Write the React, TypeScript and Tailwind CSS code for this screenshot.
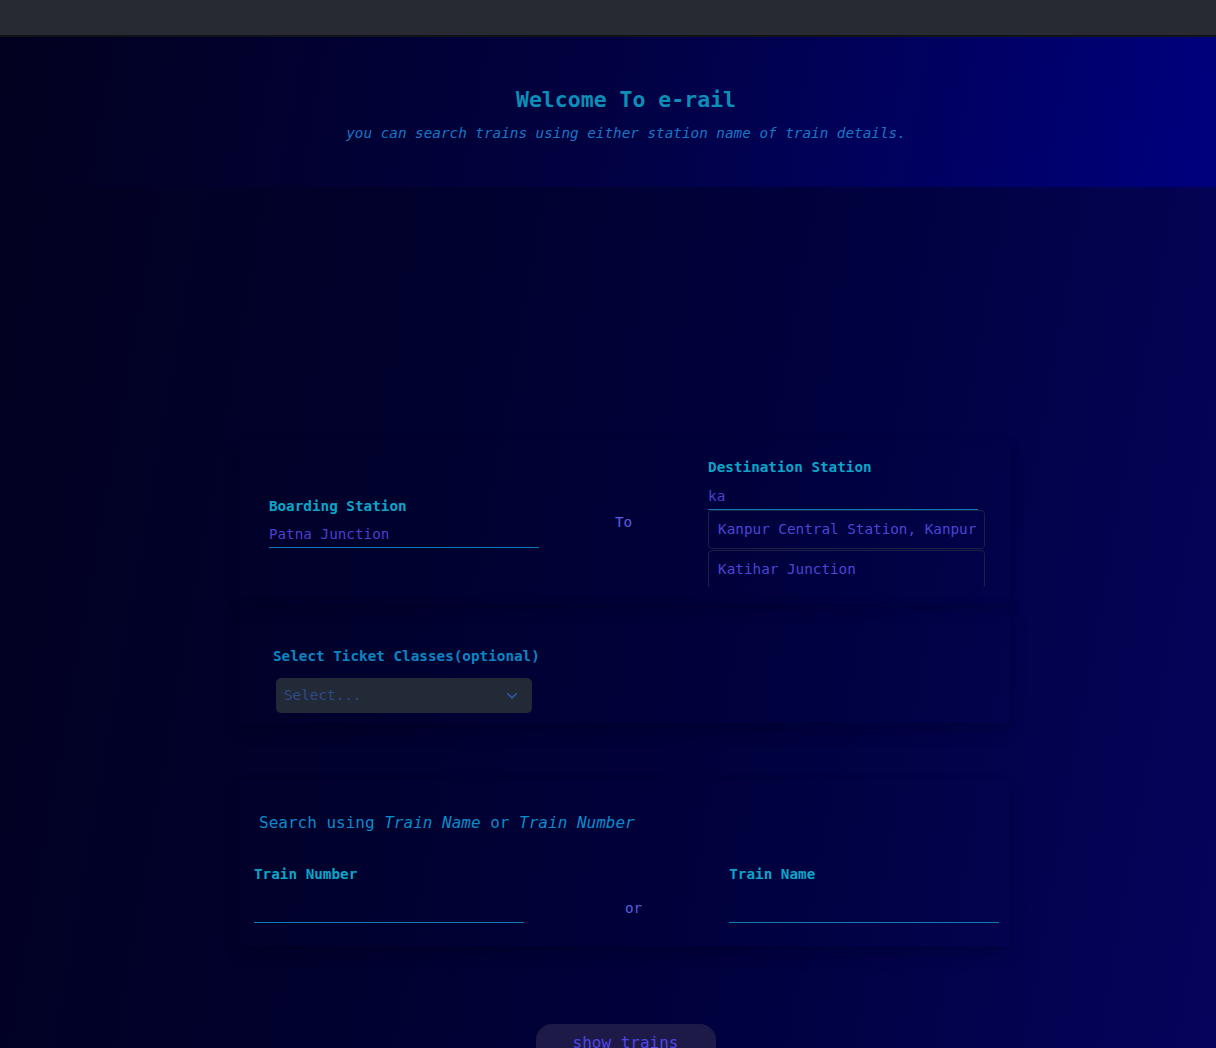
import React from 'react'
import { ChevronDown } from 'lucide-react'

const MONO = "font-['DejaVu_Sans_Mono','Liberation_Mono',monospace]"

const SUGGESTIONS = ['Kanpur Central Station, Kanpur', 'Katihar Junction']

function UnderlineInput({ value, width = 'w-[270px]' }: { value?: string; width?: string }): React.ReactElement {
  return (
    <div className={`${width} h-[28px] border-b border-b-[#0a7bb5] flex items-end pb-[2px] text-[14.3px] text-[#4a40cf]`}>
      {value}
    </div>
  )
}

export default function App(): React.ReactElement {
  return (
    <div className={`${MONO} min-h-screen flex flex-col bg-[linear-gradient(100deg,#020120_0%,#01012e_35%,#00013f_65%,#06035c_100%)]`}>
      {/* Top bar */}
      <div className="h-[37px] shrink-0 bg-[#272a32] border-b-2 border-b-[#111217]" />

      {/* Hero */}
      <div className="h-[150px] shrink-0 flex flex-col items-center pt-[48px] pl-[36px] bg-[linear-gradient(100deg,#02011f_0%,#010142_50%,#00007e_100%)]">
        <h1 className="text-[21.5px] leading-[30px] font-bold text-[#0b8fb8]">Welcome To e-rail</h1>
        <p className="mt-[8px] text-[14.3px] leading-[20px] italic text-[#1877c6]">
          you can search trains using either station name of train details.
        </p>
      </div>

      {/* Body */}
      <div className="flex-1 flex flex-col items-center pl-[34px]">
        {/* Stations */}
        <div className="mt-[254px] w-[770px] pt-4 pb-[16px] shadow-[0_6px_14px_rgba(0,0,0,0.14)] flex items-center justify-center gap-[76px] pl-[3px]">
          <div className="flex flex-col ml-[1px]">
            <label className="text-[14.3px] leading-[20px] font-bold text-[#0aa6c9]">Boarding Station</label>
            <div className="mt-[4px]">
              <UnderlineInput value="Patna Junction" />
            </div>
          </div>

          <span className="text-[14.3px] leading-[20px] text-[#5a5ee0]">To</span>

          <div className="flex flex-col w-[277px]">
            <label className="text-[14.3px] leading-[20px] font-bold text-[#0aa6c9]">Destination Station</label>
            <div className="mt-[5px]">
              <UnderlineInput value="ka" />
            </div>
            <div className="h-[77px] overflow-hidden flex flex-col gap-[1px]">
              {SUGGESTIONS.map((s) => (
                <div
                  key={s}
                  className="h-[39px] shrink-0 flex items-center pl-[9px] border border-[#1c2044] rounded-[4px] text-[14.3px] text-[#4d45d6] whitespace-nowrap overflow-hidden"
                >
                  {s}
                </div>
              ))}
            </div>
          </div>
        </div>

        {/* Ticket classes */}
        <div className="w-[770px] pt-[43px] pb-[10px] pl-[33px] shadow-[0_8px_16px_rgba(0,0,0,0.16)]">
          <label className="block text-[14.3px] leading-[20px] font-bold text-[#0a86c2]">Select Ticket Classes(optional)</label>
          <div className="mt-[12px] ml-[3px] w-[256px] h-[35px] rounded-[5px] bg-[#222a37] flex items-center justify-between pl-[8px] pr-[12px]">
            <span className="text-[14.3px] text-[#2d4a88]">Select...</span>
            <ChevronDown size={16} strokeWidth={2.5} className="text-[#2f5ea6]" />
          </div>
        </div>

        {/* Train search */}
        <div className="mt-[58px] w-[770px] pt-[30px] pb-[23px] shadow-[0_8px_16px_rgba(0,0,0,0.16)]">
          <h2 className="pl-[19px] text-[16px] leading-[24px] text-[#0b8bc9]">
            Search using <i>Train Name</i> or <i>Train Number</i>
          </h2>
          <div className="mt-[29px] pl-[14px] flex items-end">
            <div className="flex flex-col">
              <label className="text-[14.3px] leading-[20px] font-bold text-[#0aa6c9]">Train Number</label>
              <div className="mt-[11px]">
                <UnderlineInput />
              </div>
            </div>
            <span className="ml-[101px] mb-[5px] text-[14.3px] leading-[20px] text-[#5a5ee0]">or</span>
            <div className="ml-[87px] flex flex-col">
              <label className="text-[14.3px] leading-[20px] font-bold text-[#0aa6c9]">Train Name</label>
              <div className="mt-[11px]">
                <UnderlineInput />
              </div>
            </div>
          </div>
        </div>

        <button className="mt-[78px] w-[180px] pt-[7px] pb-[10px] rounded-2xl bg-[#1e1a48] text-[16px] leading-[24px] text-[#4f46e5] ml-[1px]">
          show trains
        </button>
      </div>
    </div>
  )
}
